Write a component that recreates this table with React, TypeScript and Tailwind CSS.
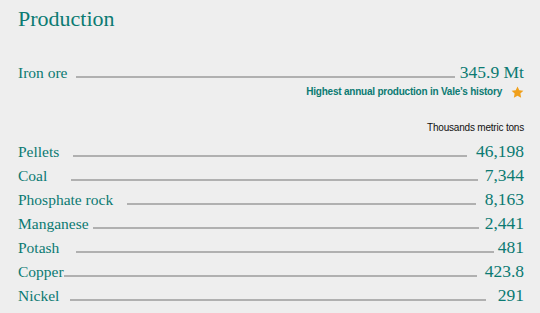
import React from "react";

const serif = { fontFamily: '"Liberation Serif", "Times New Roman", serif' };
const sans = { fontFamily: '"Liberation Sans", Arial, sans-serif' };

type Row = { label: string; value: string; ml: string; mr: string };

const rows: Row[] = [
  { label: "Pellets", value: "46,198", ml: "ml-[14px]", mr: "mr-[9px]" },
  { label: "Coal", value: "7,344", ml: "ml-[24px]", mr: "mr-[7px]" },
  { label: "Phosphate rock", value: "8,163", ml: "ml-[14px]", mr: "mr-[9px]" },
  { label: "Manganese", value: "2,441", ml: "ml-[4px]", mr: "mr-[6px]" },
  { label: "Potash", value: "481", ml: "ml-[17px]", mr: "mr-[4px]" },
  { label: "Copper", value: "423.8", ml: "ml-[0px]", mr: "mr-[8px]" },
  { label: "Nickel", value: "291", ml: "ml-[11px]", mr: "mr-[12px]" },
];

function Star() {
  return (
    <svg width="13" height="12" viewBox="0 0 24 23" className="shrink-0">
      <path
        d="M12 0.8l3.4 7.2 7.9 1-5.8 5.5 1.5 7.8L12 18.5l-7 3.8 1.5-7.8L0.7 9l7.9-1z"
        fill="#f0a01c"
      />
    </svg>
  );
}

export default function App() {
  return (
    <div className="w-[540px] h-[313px] bg-[#eeeeee] pl-[18px] pr-[16px] pt-[5px] overflow-hidden text-[#0b7a72]">
      <div style={serif} className="text-[22px] leading-[28px]">
        Production
      </div>

      <div className="mt-[29px] flex items-baseline" style={serif}>
        <span className="text-[15.5px] leading-[20px]">Iron ore</span>
        <div className="flex-1 h-[2px] bg-[#b0b0b0] ml-[8px] mr-[5px]" />
        <span className="text-[17.5px] leading-[20px]">345.9 Mt</span>
      </div>

      <div className="mt-[2px] flex items-center justify-end gap-[9px]">
        <span style={sans} className="text-[10px] font-bold leading-[14px] tracking-[-0.22px]">
          Highest annual production in Vale’s history
        </span>
        <Star />
      </div>

      <div
        style={sans}
        className="mt-[22px] text-right text-[10px] leading-[14px] tracking-[-0.2px] text-[#111111]"
      >
        Thousands metric tons
      </div>

      <div className="mt-[5px] flex flex-col" style={serif}>
        {rows.map((r) => (
          <div key={r.label} className="flex items-baseline h-[24px]">
            <span className="text-[15.5px] leading-[22px]">{r.label}</span>
            <div className={`flex-1 h-[2px] bg-[#b0b0b0] ${r.ml} ${r.mr}`} />
            <span className="text-[17.5px] leading-[22px]">{r.value}</span>
          </div>
        ))}
      </div>
    </div>
  );
}
